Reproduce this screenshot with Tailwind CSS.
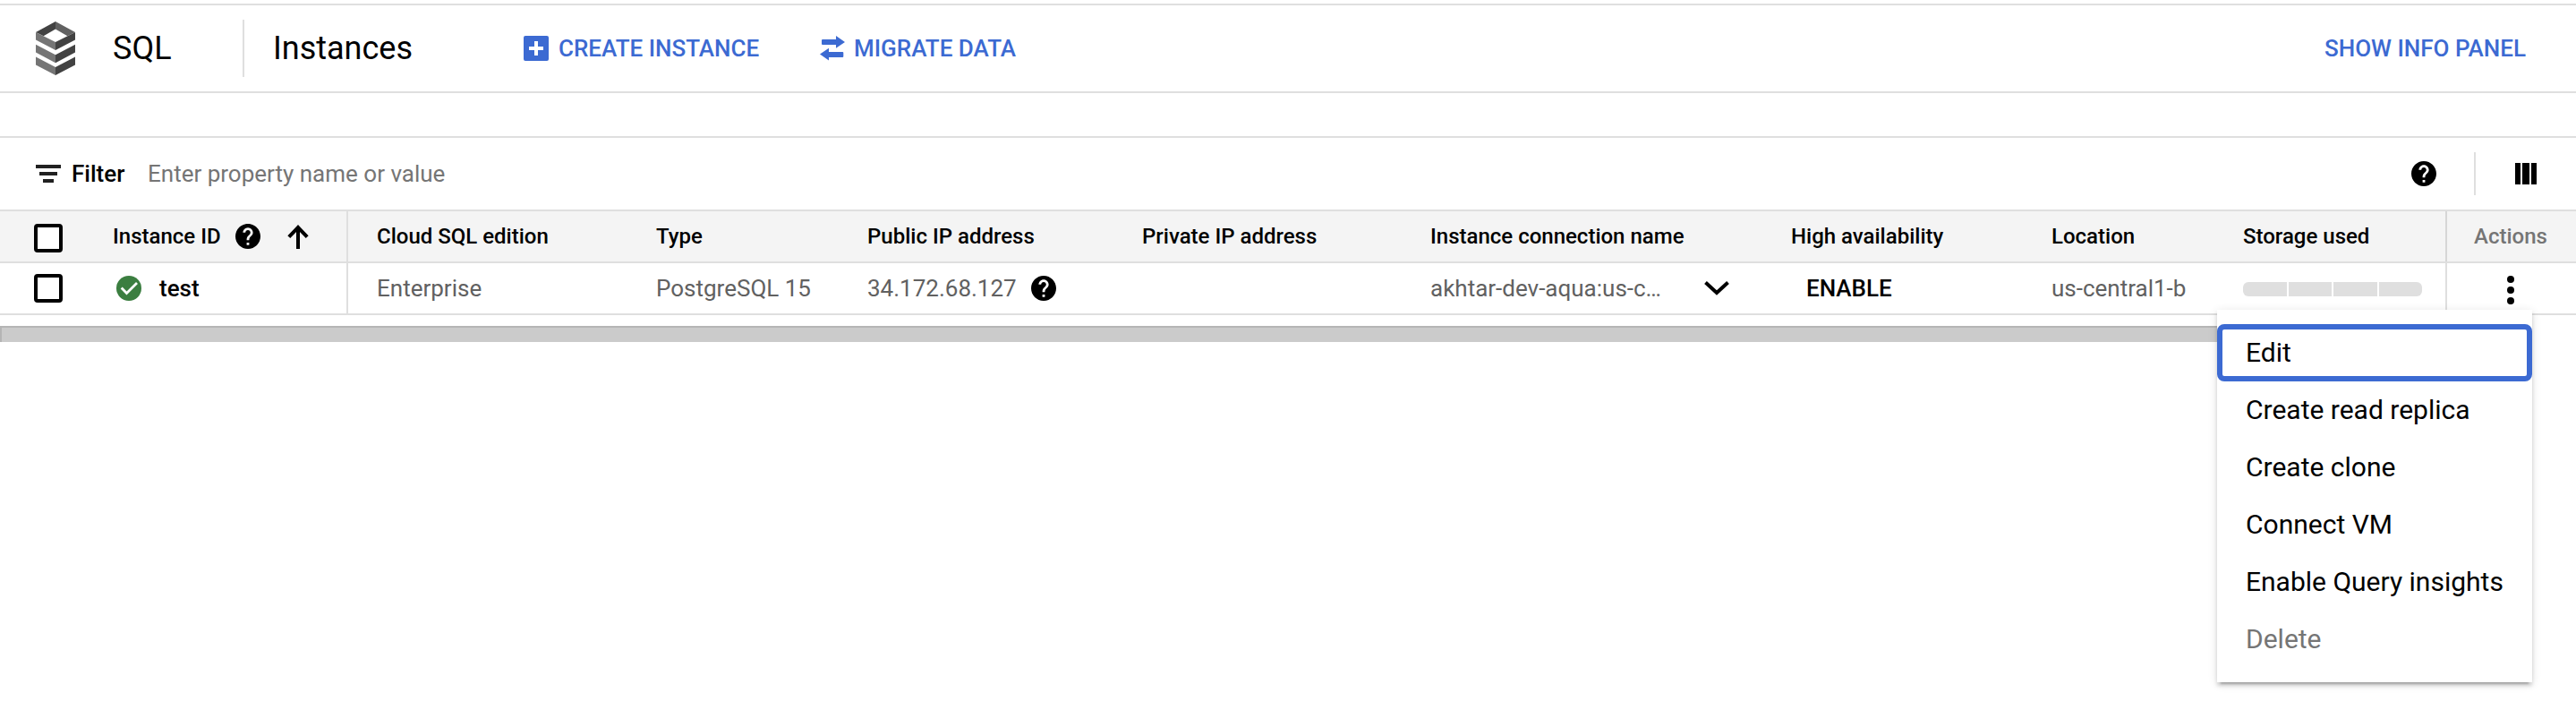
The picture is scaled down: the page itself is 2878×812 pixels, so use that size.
<!DOCTYPE html>
<html lang="en">
<head>
<meta charset="utf-8">
<title>SQL Instances</title>
<script src="https://cdn.jsdelivr.net/npm/@tailwindcss/browser@4"></script>
</head>
<body class="bg-white font-['Roboto',sans-serif] text-black">
<svg class="hidden">
  <symbol id="help" viewBox="2 2 20 20"><path d="M12 2C6.48 2 2 6.48 2 12s4.48 10 10 10 10-4.48 10-10S17.52 2 12 2zm1 17h-2v-2h2v2zm2.070-7.750l-.9.920C13.450 12.900 13 13.500 13 15h-2v-.5c0-1.100.450-2.100 1.170-2.830l1.240-1.260c.370-.360.590-.860.590-1.410 0-1.100-.9-2-2-2s-2 .9-2 2H8c0-2.210 1.790-4 4-4s4 1.790 4 4c0 .880-.360 1.680-.930 2.250z"/></symbol>
</svg>
<div class="relative flex h-[812px] w-[2878px] flex-col overflow-hidden whitespace-nowrap pt-1">

  <!-- Title bar -->
  <header class="flex h-[100px] shrink-0 items-center border-y-2 border-[#dfdfdf] pl-10 pr-14">
    <svg class="h-[60px] w-11" viewBox="0 0 44 60">
      <path fill="#424242" d="M22 0v8.500L8.600 16.300 0 12z"/>
      <path fill="#616161" d="M22 0v8.500l13.400 7.800L44 12z"/>
      <path fill="#757575" d="M0 12l22 11v9L0 20.500zM0 25.700L22 37.200v9L0 34.500zM0 39.500L22 51v9L0 48.500z"/>
      <path fill="#424242" d="M44 12L22 23v9l22-11.500zM44 25.700L22 37.200v9l22-11.700zM44 39.500L22 51v9l22-11.500z"/>
    </svg>
    <h1 class="ml-[42px] w-[145px] text-[36px] leading-[48px]">SQL</h1>
    <div class="h-16 w-0.5 bg-[#dfdfdf]"></div>
    <h2 class="ml-8 w-[280px] text-[36px] leading-[48px]">Instances</h2>
    <button class="flex w-[331px] items-center gap-[11px] text-[26px] leading-8 font-medium text-[#3c6ad2]">
      <svg class="size-7" viewBox="0 0 28 28"><rect width="28" height="28" rx="2" fill="#3c6ad2"/><path d="M6 14h16M14 6v16" stroke="#fff" stroke-width="4"/></svg>
      CREATE INSTANCE
    </button>
    <button class="flex items-center gap-2.5 text-[26px] leading-8 font-medium text-[#3c6ad2]">
      <svg class="size-7" viewBox="0 0 28 28" fill="#3c6ad2"><path d="M3 4h15V0l10 7-10 6.700V10H3a1 1 0 0 1-1-1V5a1 1 0 0 1 1-1zM25.300 18H10v-4.300L0 20.600l10 7V24h15.300a1 1 0 0 0 1-1v-4a1 1 0 0 0-1-1z"/></svg>
      MIGRATE DATA
    </button>
    <button class="ml-auto text-[26px] leading-8 font-medium text-[#3c6ad2]">SHOW INFO PANEL</button>
  </header>

  <!-- Filter bar -->
  <div class="mt-12 flex h-[84px] shrink-0 items-center border-y-2 border-[#dfdfdf] pl-10 pr-11 text-[26px] leading-8">
    <svg class="h-5 w-7" viewBox="0 0 28 20" fill="#212121"><path d="M0 0h28v4H0zM4 8h20v4H4zM8 16h12v4H8z"/></svg>
    <div class="ml-3 w-[85px] font-medium">Filter</div>
    <div class="text-[#757575]">Enter property name or value</div>
    <svg class="ml-auto size-7"><use href="#help"/></svg>
    <div class="ml-[42px] h-12 w-0.5 bg-[#dfdfdf]"></div>
    <svg class="ml-11 size-6" viewBox="0 0 24 24"><path d="M0 0h6v24H0zM8 0h8v24H8zM18 0h6v24h-6z"/></svg>
  </div>

  <!-- Table head -->
  <div class="flex h-[58px] shrink-0 border-b-2 border-[#dfdfdf] bg-[#f4f4f4] text-[24px] leading-8 font-medium *:flex *:items-center *:shrink-0">
    <div class="w-[389px] border-r-2 border-[#dfdfdf] pl-[38px]">
      <span class="mt-1 size-8 rounded-[4px] border-4 border-black bg-white"></span>
      <span class="ml-14 w-[137px]">Instance ID</span>
      <svg class="size-7"><use href="#help"/></svg>
      <svg class="ml-[30px] h-7 w-6" viewBox="0 0 24 28" fill="none" stroke="#000" stroke-width="4"><path d="M12 28V4M1.800 14.700L12 4l10.200 10.700"/></svg>
    </div>
    <div class="w-[343px] pl-8">Cloud SQL edition</div>
    <div class="w-[237px] pl-px">Type</div>
    <div class="w-[307px]">Public IP address</div>
    <div class="w-[322px]">Private IP address</div>
    <div class="w-[403px]">Instance connection name</div>
    <div class="w-[291px]">High availability</div>
    <div class="w-[214px]">Location</div>
    <div class="w-[228px] border-r-2 border-[#d6d6d6]">Storage used</div>
    <div class="w-[144px] pl-[30px] text-[#757575]">Actions</div>
  </div>

  <!-- Table row -->
  <div class="flex h-[58px] shrink-0 border-b-2 border-[#dfdfdf] text-[26px] leading-8 text-[#616161] *:flex *:items-center *:shrink-0">
    <div class="w-[389px] border-r-2 border-[#dfdfdf] pl-[38px]">
      <span class="size-8 rounded-[4px] border-4 border-black"></span>
      <svg class="ml-[60px] size-7" viewBox="0 0 28 28"><circle cx="14" cy="14" r="14" fill="#3b7e40"/><path d="M5.700 13.500l5.800 6L23 8" fill="none" stroke="#fff" stroke-width="2.800"/></svg>
      <span class="ml-5 font-medium text-black">test</span>
    </div>
    <div class="w-[343px] pl-8">Enterprise</div>
    <div class="w-[237px] pl-px">PostgreSQL 15</div>
    <div class="w-[307px]"><span class="w-[183px]">34.172.68.127</span><svg class="size-7" fill="#000"><use href="#help"/></svg></div>
    <div class="w-[322px]"></div>
    <div class="w-[403px]">
      <span class="w-[306px]">akhtar-dev-aqua:us-c…</span>
      <svg class="h-4 w-7" viewBox="0 0 28 16"><path d="M1.500 1.500L14 13 26.500 1.500" fill="none" stroke="#000" stroke-width="4"/></svg>
    </div>
    <div class="w-[291px] pl-[17px] font-medium text-black">ENABLE</div>
    <div class="w-[214px]">us-central1-b</div>
    <div class="w-[228px] border-r-2 border-[#dfdfdf]">
      <div class="mt-0.5 flex h-4 w-[200px] gap-0.5 overflow-hidden rounded-[6px] *:flex-1 *:bg-[#dfdfdf]"><i></i><i></i><i></i><i></i></div>
    </div>
    <div class="w-[144px] pl-[67px]">
      <svg class="mt-1 h-8 w-2" viewBox="0 0 8 32"><circle cx="4" cy="4" r="4"/><circle cx="4" cy="16" r="4"/><circle cx="4" cy="28" r="4"/></svg>
    </div>
  </div>

  <!-- Horizontal scrollbar -->
  <div class="mt-3 h-[18px] w-[2600px] shrink-0 border-t-2 border-l-2 border-[#b5b5b5] bg-[#cbcbcb]"></div>

  <!-- Row actions menu -->
  <div class="absolute top-[346px] left-[2477px] flex h-[416px] w-[352px] flex-col bg-white pt-4 text-[30px] leading-9 shadow-[0_6px_2px_-4px_rgba(0,0,0,0.2),0_4px_4px_0_rgba(0,0,0,0.14),0_2px_10px_0_rgba(0,0,0,0.12)] *:flex *:h-16 *:shrink-0 *:items-center">
    <div class="rounded-[8px] border-6 border-[#3c6ad2] pl-[26px]">Edit</div>
    <div class="pl-8">Create read replica</div>
    <div class="pl-8">Create clone</div>
    <div class="pl-8">Connect VM</div>
    <div class="pl-8">Enable Query insights</div>
    <div class="pl-8 text-[#757575]">Delete</div>
  </div>
</div>
</body>
</html>
